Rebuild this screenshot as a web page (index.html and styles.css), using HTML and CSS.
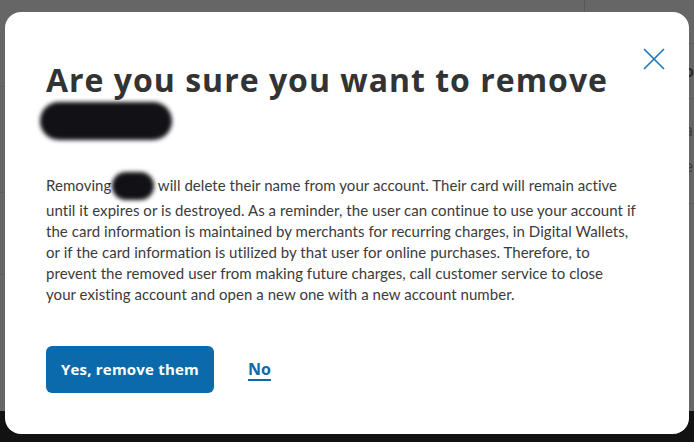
FILE: index.html
```html
<!DOCTYPE html>
<html lang="en">
<head>
    <meta charset="UTF-8">
    <meta name="viewport" content="width=device-width, initial-scale=1.0">
    <title>Remove authorized user</title>
    <link rel="stylesheet" href="styles.css">
</head>
<body>
    <div class="page">
        <div class="page-main">
            <div class="row row-a"></div>
            <div class="row row-b"></div>
            <div class="row row-c"></div>
            <div class="row row-d"></div>
        </div>
        <div class="page-side">
            <div class="side-head"></div>
            <div class="side-row"><span class="side-label">o</span></div>
            <div class="side-row side-tall">
                <span class="side-text">a</span>
                <span class="side-text">e</span>
            </div>
        </div>
    </div>
    <div class="page-footer"></div>

    <div class="modal" role="dialog" aria-labelledby="modal-title">
        <button class="modal-close" aria-label="Close">
            <svg width="22" height="22" viewBox="0 0 22 22">
                <path d="M1 1 L21 21 M21 1 L1 21" stroke="#1a75b9" stroke-width="1.6" fill="none"/>
            </svg>
        </button>

        <h1 id="modal-title" class="modal-title">
            Are you sure you want to remove<br>
            <span class="redacted redacted-lg"></span>
        </h1>

        <p class="modal-text">
            Removing <span class="redacted redacted-sm"></span> will delete their name from your account. Their card will remain active<br>
            until it expires or is destroyed. As a reminder, the user can continue to use your account if<br>
            the card information is maintained by merchants for recurring charges, in Digital Wallets,<br>
            or if the card information is utilized by that user for online purchases. Therefore, to<br>
            prevent the removed user from making future charges, call customer service to close<br>
            your existing account and open a new one with a new account number.
        </p>

        <div class="modal-actions">
            <button class="btn-primary">Yes, remove them</button>
            <a href="#" class="link-no">No</a>
        </div>
    </div>
</body>
</html>
```

FILE: styles.css
```css
* {
    margin: 0;
    padding: 0;
    box-sizing: border-box;
}

body {
    font-family: "Open Sans", Arial, sans-serif;
    background: #666666;
    color: #333333;
    height: 100vh;
    overflow: hidden;
}

/* dimmed page */
.page {
    display: flex;
    height: 411px;
}

.page-main {
    width: 591px;
}

.row {
    border-bottom: 1px solid #5c5c5c;
}

.row-a { height: 87px; }
.row-b { height: 106px; }
.row-c { height: 82px; }
.row-d { height: 0; border: 0; }

.page-side {
    flex: 1;
}

.side-head {
    height: 44px;
    border-left: 1px solid #585858;
    border-bottom: 1px solid #5c5c5c;
}

.side-row {
    height: 55px;
    border-bottom: 1px solid #5c5c5c;
    padding: 16px 0 0 100px;
}

.side-label {
    font-weight: 700;
    font-size: 16px;
    color: #2a2a2a;
}

.side-tall {
    height: 105px;
    padding-top: 20px;
    display: flex;
    flex-direction: column;
    gap: 14px;
}

.side-text {
    font-size: 16px;
    color: #3a3a3a;
}

.page-footer {
    height: 31px;
    background: #121212;
}

/* dialog */
.modal {
    position: fixed;
    left: 5px;
    top: 12px;
    width: 684px;
    height: 422px;
    background: #ffffff;
    border-radius: 16px;
    padding: 48px 20px 0 41px;
}

.modal-close {
    position: absolute;
    top: 36px;
    right: 24px;
    background: none;
    border: 0;
    width: 22px;
    height: 22px;
    cursor: pointer;
}

.modal-close svg {
    display: block;
}

.modal-title {
    font-size: 32px;
    font-weight: 700;
    line-height: 40px;
    color: #333333;
    letter-spacing: 1px;
    white-space: nowrap;
}

.redacted {
    display: inline-block;
    background: #111116;
    filter: blur(2px);
    vertical-align: middle;
}

.redacted-lg {
    width: 132px;
    height: 38px;
    border-radius: 19px;
    margin: -4px 0 0 -6px;
}

.redacted-sm {
    width: 42px;
    height: 28px;
    border-radius: 14px;
    margin: -4px 0 0 -3px;
}

.modal-text {
    margin-top: 35px;
    font-family: Lato, "Open Sans", Arial, sans-serif;
    font-size: 15px;
    line-height: 21px;
    letter-spacing: 0.05px;
    color: #3b3b3b;
    white-space: nowrap;
}

.modal-actions {
    display: flex;
    align-items: center;
    gap: 34px;
    margin-top: 41px;
}

.btn-primary {
    font-family: inherit;
    background: #0a6aac;
    color: #ffffff;
    border: 0;
    border-radius: 6px;
    width: 168px;
    height: 47px;
    font-size: 15px;
    font-weight: 700;
    letter-spacing: 0.2px;
    cursor: pointer;
}

.link-no {
    color: #0a6aac;
    font-weight: 700;
    font-size: 16px;
    text-decoration: underline;
    text-decoration-thickness: 2px;
    text-underline-offset: 4px;
}
```
